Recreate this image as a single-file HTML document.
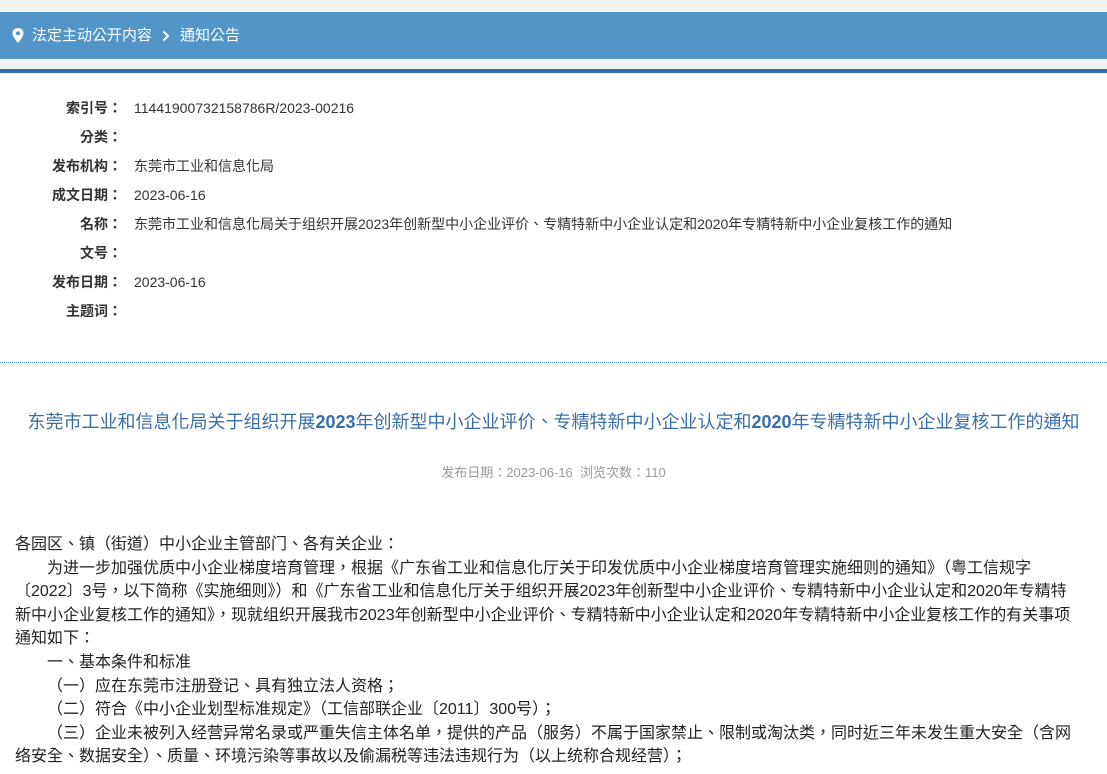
<!DOCTYPE html>
<html><head><meta charset="utf-8"><style>
*{margin:0;padding:0;box-sizing:border-box}
body{width:1107px;height:774px;overflow:hidden;background:#fff;font-family:"Liberation Sans","Noto Sans CJK TC",sans-serif;color:#333}
.top{height:12px;background:#f2f2f2}
.bar{height:47px;background:#5195c9;color:#fff;font-size:15px;line-height:47px;padding-left:12px;display:flex;align-items:center}
.gap{height:10px;background:#f2f2f2}
.line{height:4px;background:#336ea6}
.meta{position:absolute;top:98px;left:0;font-size:14px}
.row{height:29px;line-height:20px;display:flex}
.lab{width:122px;text-align:right;font-weight:bold;color:#333}
.val{margin-left:12px;color:#333}
.dot{position:absolute;top:362px;left:0;width:1107px;border-top:1px dotted #3a96d4}
.title{position:absolute;top:408px;left:0;width:1107px;text-align:center;font-size:18px;color:#3a6ea8;white-space:nowrap}
.date{position:absolute;top:462px;left:0;width:1107px;text-align:center;font-size:13px;color:#999}
.body{position:absolute;top:533px;left:15px;font-size:16px;line-height:23.6px;color:#222;white-space:nowrap}
</style></head><body>
<div class="top"></div>
<div class="bar"><svg width="12" height="15" viewBox="0 0 12 15"><path d="M6 0C2.7 0 0.5 2.4 0.5 5.3 0.5 9 6 15 6 15S11.5 9 11.5 5.3C11.5 2.4 9.3 0 6 0Z" fill="#fff"/><circle cx="6" cy="5.3" r="2" fill="#5195c9"/></svg><span style="margin-left:8px">法定主动公开内容</span><svg style="margin:0 10px" width="8" height="12" viewBox="0 0 8 12"><path d="M1.5 1.5L6 6 1.5 10.5" stroke="#fff" stroke-width="2" fill="none"/></svg><span>通知公告</span></div>
<div class="gap"></div>
<div class="line"></div>
<div class="meta">
<div class="row"><div class="lab">索引号：</div><div class="val">11441900732158786R/2023-00216</div></div>
<div class="row"><div class="lab">分类：</div><div class="val"></div></div>
<div class="row"><div class="lab">发布机构：</div><div class="val">东莞市工业和信息化局</div></div>
<div class="row"><div class="lab">成文日期：</div><div class="val">2023-06-16</div></div>
<div class="row"><div class="lab">名称：</div><div class="val">东莞市工业和信息化局关于组织开展2023年创新型中小企业评价、专精特新中小企业认定和2020年专精特新中小企业复核工作的通知</div></div>
<div class="row"><div class="lab">文号：</div><div class="val"></div></div>
<div class="row"><div class="lab">发布日期：</div><div class="val">2023-06-16</div></div>
<div class="row"><div class="lab">主题词：</div><div class="val"></div></div>
</div>
<div class="dot"></div>
<div class="title">东莞市工业和信息化局关于组织开展<b>2023</b>年创新型中小企业评价、专精特新中小企业认定和<b>2020</b>年专精特新中小企业复核工作的通知</div>
<div class="date">发布日期：2023-06-16&nbsp;&nbsp;浏览次数：110</div>
<div class="body">
<div>各园区、镇（街道）中小企业主管部门、各有关企业：</div>
<div>&emsp;&emsp;为进一步加强优质中小企业梯度培育管理，根据《广东省工业和信息化厅关于印发优质中小企业梯度培育管理实施细则的通知》（粤工信规字</div>
<div>〔2022〕3号，以下简称《实施细则》）和《广东省工业和信息化厅关于组织开展2023年创新型中小企业评价、专精特新中小企业认定和2020年专精特</div>
<div>新中小企业复核工作的通知》，现就组织开展我市2023年创新型中小企业评价、专精特新中小企业认定和2020年专精特新中小企业复核工作的有关事项</div>
<div>通知如下：</div>
<div>&emsp;&emsp;一、基本条件和标准</div>
<div>&emsp;&emsp;（一）应在东莞市注册登记、具有独立法人资格；</div>
<div>&emsp;&emsp;（二）符合《中小企业划型标准规定》（工信部联企业〔2011〕300号）；</div>
<div>&emsp;&emsp;（三）企业未被列入经营异常名录或严重失信主体名单，提供的产品（服务）不属于国家禁止、限制或淘汰类，同时近三年未发生重大安全（含网</div>
<div>络安全、数据安全）、质量、环境污染等事故以及偷漏税等违法违规行为（以上统称合规经营）；</div>
</div>
</body></html>
